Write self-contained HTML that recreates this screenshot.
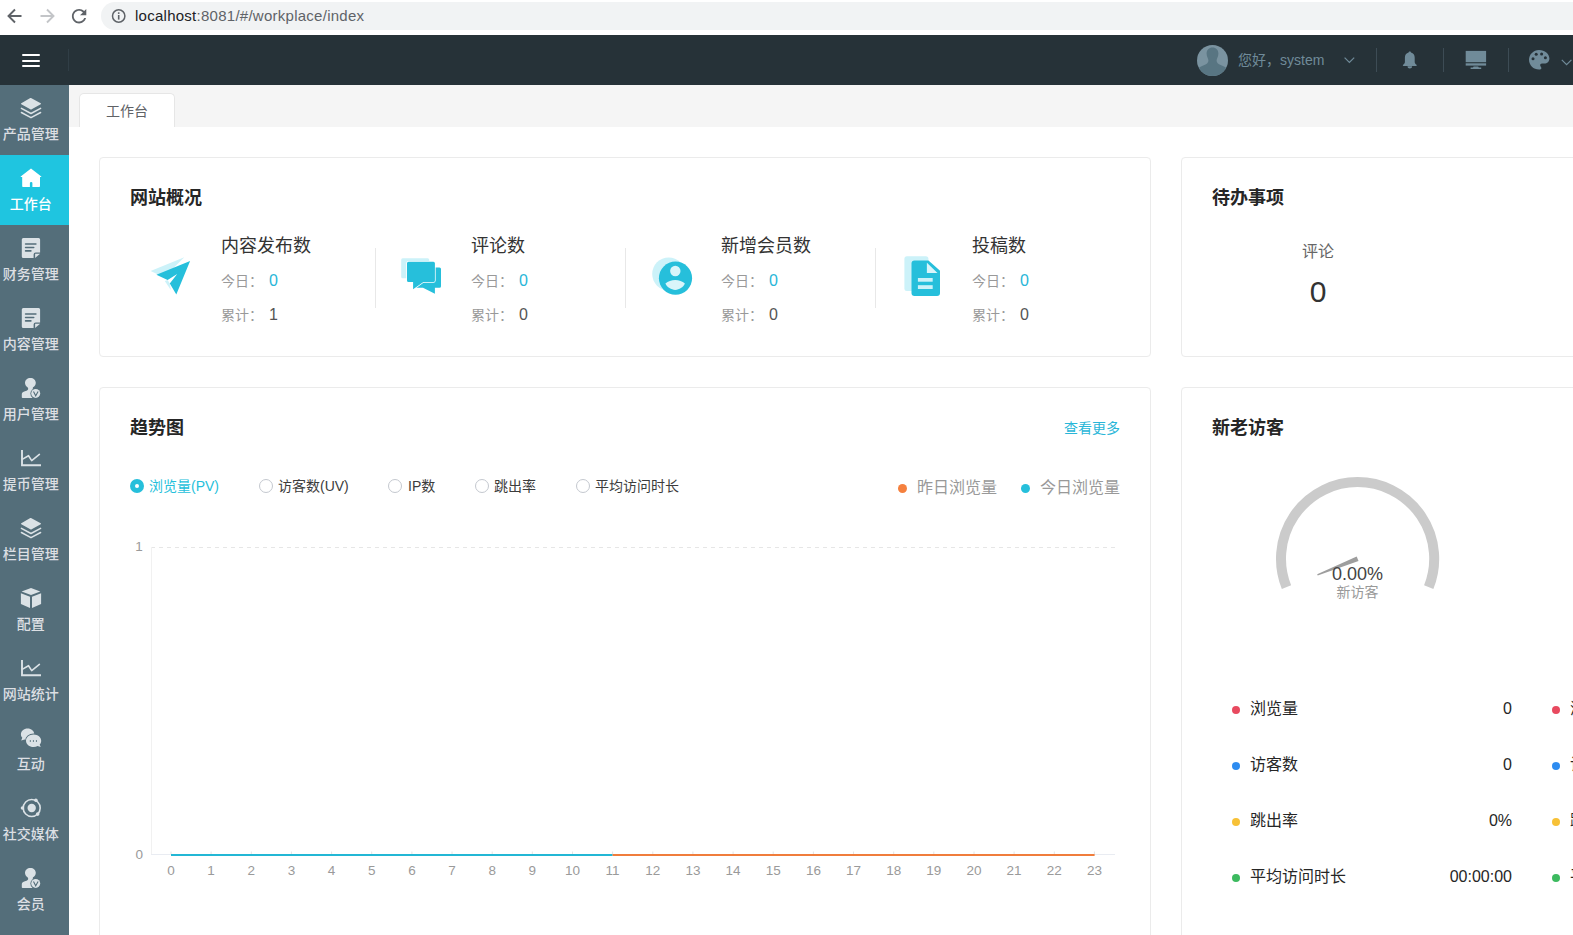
<!DOCTYPE html>
<html lang="zh-CN">
<head>
<meta charset="utf-8">
<title>工作台</title>
<style>
*{box-sizing:border-box;margin:0;padding:0}
html,body{width:1573px;height:935px;overflow:hidden;background:#fff}
body{position:relative;font-family:"Liberation Sans","Noto Sans CJK SC",sans-serif;color:#303133;font-size:14px}
.abs{position:absolute}
.t{position:absolute;white-space:nowrap;line-height:1}
/* browser chrome */
#chrome{left:0;top:0;width:1573px;height:35px;background:#fff}
#url{left:101px;top:2px;width:1600px;height:28px;border-radius:14px;background:#f1f3f4}
/* header */
#hdr{left:0;top:35px;width:1573px;height:50px;background:#263238}
/* sidebar */
#side{left:0;top:85px;width:69px;height:850px;background:#546e7a}
.mi{position:absolute;left:0;width:69px;height:70px;color:#dcdfe3}
.mi.on{background:#1fc5e0;color:#fff}
.mi .lb{font-weight:500;position:absolute;left:-24px;width:109.600px;text-align:center;top:41px;font-size:14px;line-height:16px;white-space:nowrap;letter-spacing:0}
.mi svg{position:absolute;left:19px;top:11px;width:24px;height:24px}
/* tabs */
#tabs{left:69px;top:85px;width:1504px;height:42px;background:#f5f5f5}
#tab{left:79px;top:93px;width:96px;height:34px;background:#fff;border:1px solid #e6e6e6;border-bottom:none;border-radius:5px 5px 0 0}
/* cards */
.card{position:absolute;background:#fff;border:1px solid #ebebeb;border-radius:4px}
.h{font-weight:bold;font-size:18px;color:#262626}
.g{color:#999;font-size:14px}
.c{color:#29b6d8}
.sep{position:absolute;width:1px;background:#e8e8e8}
</style>
</head>
<body>
<!-- browser chrome -->
<div class="abs" id="chrome"></div>
<div class="abs" id="url"></div>
<svg class="abs" style="left:0;top:0" width="135" height="35" viewBox="0 0 135 35">
  <g fill="none" stroke="#5f6368" stroke-width="1.9" stroke-linecap="butt" stroke-linejoin="miter">
    <path d="M21.5 16H9.5M15 9.5L8.5 16L15 22.500"/>
  </g>
  <path transform="translate(68.300 5.400) scale(0.900)" fill="#5f6368" d="M17.650 6.350C16.200 4.900 14.210 4 12 4c-4.420 0-7.990 3.580-7.990 8s3.570 8 7.990 8c3.730 0 6.840-2.550 7.730-6h-2.080c-.82 2.330-3.040 4-5.650 4-3.310 0-6-2.690-6-6s2.690-6 6-6c1.660 0 3.140.69 4.220 1.780L13 11h7V4l-2.350 2.350z"/>
  <g fill="none" stroke="#c3c5c8" stroke-width="1.9">
    <path d="M40.500 16H52.500M47 9.500L53.500 16L47 22.500"/>
  </g>
  <circle cx="118.700" cy="16" r="6.200" fill="none" stroke="#5f6368" stroke-width="1.500"/>
  <rect x="117.900" y="15" width="1.600" height="4.600" fill="#5f6368"/>
  <rect x="117.900" y="12.300" width="1.600" height="1.600" fill="#5f6368"/>
</svg>
<div class="t" style="left:135px;top:7px;font-size:15px;letter-spacing:0.260px;color:#202124;line-height:17px">localhost<span style="color:#5f6368">:8081/#/workplace/index</span></div>

<!-- header -->
<div class="abs" id="hdr"></div>
<div class="abs" style="left:22px;top:54px;width:18px;height:2px;background:#fff;border-radius:1px"></div>
<div class="abs" style="left:22px;top:59.500px;width:18px;height:2.200px;background:#fff;border-radius:1px"></div>
<div class="abs" style="left:22px;top:65px;width:18px;height:2px;background:#fff;border-radius:1px"></div>
<div class="abs" style="left:68px;top:49px;width:1px;height:22px;background:#303e46"></div>


<!-- header right -->
<svg class="abs" style="left:1190px;top:35px" width="383" height="50" viewBox="1190 35 383 50">
  <defs><clipPath id="av"><circle cx="1212.500" cy="60.500" r="15.500"/></clipPath></defs>
  <circle cx="1212.500" cy="60.500" r="15.500" fill="#7a93a0"/>
  <g clip-path="url(#av)" fill="#587582">
    <path d="M1212.500 47.500C1216 47.500 1218.400 50 1218.400 53.500C1218.400 55 1218 56.500 1217.400 57.800C1217 58.800 1216.600 59.600 1216.600 60.600C1216.600 62.200 1217.400 63.300 1219 64.200L1224 66.600C1226 67.600 1227 68.800 1227.500 70.500V78H1197.500V70.500C1198 68.800 1199 67.600 1201 66.600L1206 64.200C1207.600 63.300 1208.400 62.200 1208.400 60.600C1208.400 59.600 1208 58.800 1207.600 57.800C1207 56.500 1206.600 55 1206.600 53.500C1206.600 50 1209 47.500 1212.500 47.500Z"/>
  </g>
  <path d="M1344.600 57.600L1349.400 62.400L1354.200 57.600" fill="none" stroke="#708b99" stroke-width="1.200"/>
  <rect x="1376" y="48" width="1" height="24" fill="#3d4c55"/>
  <rect x="1443" y="48" width="1" height="24" fill="#3d4c55"/>
  <rect x="1508" y="48" width="1" height="24" fill="#3d4c55"/>
  <!-- bell -->
  <path d="M1409.800 51.400C1410.600 51.400 1411 51.900 1411 52.600C1413.400 53.200 1414.700 55.200 1414.700 57.600V62C1414.700 63.200 1415.400 64 1416.500 64.800C1416.900 65.100 1416.800 65.900 1416.200 65.900H1403.400C1402.800 65.900 1402.700 65.100 1403.100 64.800C1404.200 64 1404.900 63.200 1404.900 62V57.600C1404.900 55.200 1406.200 53.200 1408.600 52.600C1408.600 51.900 1409 51.400 1409.800 51.400Z" fill="#708b99"/>
  <path d="M1407.500 66.300H1412.100C1412.100 67.700 1411.100 68.500 1409.800 68.500C1408.500 68.500 1407.500 67.700 1407.500 66.300Z" fill="#708b99"/>
  <!-- monitor -->
  <rect x="1465.700" y="50.900" width="20.400" height="11.300" fill="#708b99"/>
  <rect x="1465.700" y="63.300" width="20.400" height="2.300" fill="#708b99"/>
  <path d="M1473.600 66.400H1478.200L1478.800 67.400H1481.200V68.900H1470.600V67.400H1473Z" fill="#708b99"/>
  <!-- palette -->
  <path d="M1539 49.900C1544.800 49.900 1549.400 53.800 1549.400 58.600C1549.400 61.600 1547.200 63.600 1544.400 63.600H1542C1540.800 63.600 1540.200 64.400 1540.200 65.200C1540.200 65.800 1540.500 66.200 1540.800 66.700C1541.200 67.200 1541.400 67.600 1541.400 68.200C1541.400 69.100 1540.500 69.600 1539 69.600C1533.500 69.600 1529 65.300 1529 59.800C1529 54.300 1533.500 49.900 1539 49.900Z" fill="#708b99"/>
  <g fill="#263238"><circle cx="1533" cy="58.700" r="1.500"/><circle cx="1536.200" cy="54.300" r="1.500"/><circle cx="1541.600" cy="54" r="1.500"/><circle cx="1545.400" cy="57.800" r="1.500"/></g>
  <path d="M1561.800 59.800L1566.600 64.600L1571.400 59.800" fill="none" stroke="#708b99" stroke-width="1.200"/>
</svg>
<div class="t" style="left:1238px;top:53px;font-size:14px;line-height:14px;color:#708b99">您好，system</div>

<!-- sidebar -->
<div class="abs" id="side"></div>
<div class="mi" style="top:85px"><svg viewBox="0 0 24 24"><path d="M12 1.900L21.700 7.200Q22.500 7.700 21.700 8.200L12.700 13.300Q12 13.700 11.300 13.300L2.300 8.200Q1.500 7.700 2.300 7.200L11.300 2.100Q12 1.700 12.700 2.100Z" fill="#dbe2e6"/><path d="M2.400 12.300L12 17.500L21.600 12.300M2.400 16.500L12 21.700L21.600 16.500" fill="none" stroke="#dbe2e6" stroke-width="1.500" stroke-linecap="round" stroke-linejoin="round"/></svg><div class="lb">产品管理</div></div>
<div class="mi on" style="top:155px"><svg viewBox="0 0 24 24"><path d="M12 2.600L22.300 10.600Q22.500 11.100 21.900 11.100H21V20.200Q21 21 20.200 21H13.400V17Q13.400 16 12.200 16Q10.900 16 10.900 17V21H4Q3.200 21 3.200 20.200V11.100H2.100Q1.500 11.100 1.700 10.600Z" fill="#fff"/></svg><div class="lb">工作台</div></div>
<div class="mi" style="top:225px"><svg viewBox="0 0 24 24"><path d="M4.300 1.900H19.600Q21.100 1.900 21.100 3.400V16.400H16.600Q14.600 16.400 14.600 18.400V22.100H4.300Q2.800 22.100 2.800 20.600V3.400Q2.800 1.900 4.300 1.900Z" fill="#dbe2e6"/><path d="M16.100 17.700H21.100L16.100 22.100Z" fill="#dbe2e6"/><path d="M6.600 8H16.900M6.600 11.500H14.700M6.600 14.900H11.900" stroke="#546e7a" stroke-width="1.600" stroke-linecap="round" fill="none"/></svg><div class="lb">财务管理</div></div>
<div class="mi" style="top:295px"><svg viewBox="0 0 24 24"><path d="M4.300 1.900H19.600Q21.100 1.900 21.100 3.400V16.400H16.600Q14.600 16.400 14.600 18.400V22.100H4.300Q2.800 22.100 2.800 20.600V3.400Q2.800 1.900 4.300 1.900Z" fill="#dbe2e6"/><path d="M16.100 17.700H21.100L16.100 22.100Z" fill="#dbe2e6"/><path d="M6.600 8H16.900M6.600 11.500H14.700M6.600 14.900H11.900" stroke="#546e7a" stroke-width="1.600" stroke-linecap="round" fill="none"/></svg><div class="lb">内容管理</div></div>
<div class="mi" style="top:365px"><svg viewBox="0 0 24 24"><path d="M11.400 1.900C14.500 1.900 16.800 4 16.800 6.800C16.800 8.800 15.600 10.400 14.100 11.200C13.600 11.600 13.600 12.700 14.200 13L15 13.500L14 22H3.600Q2.800 22 2.800 21.200V18.200C2.800 16.800 3.800 16 5.200 15.600L7.600 14.800C8.800 14.300 9.200 13.600 9.200 12.800C9.200 12 8.800 11.600 8.200 11C6.900 10 6 8.600 6 6.800C6 4 8.300 1.900 11.400 1.900Z" fill="#dbe2e6"/><circle cx="16.700" cy="17.400" r="5.300" fill="#546e7a"/><circle cx="16.700" cy="17.400" r="4.500" fill="#dbe2e6"/><path d="M14.500 15.500L16.700 19.800L19.100 15.500" fill="none" stroke="#546e7a" stroke-width="1.100"/></svg><div class="lb">用户管理</div></div>
<div class="mi" style="top:435px"><svg viewBox="0 0 24 24"><path d="M3 3.900V19.200H22" fill="none" stroke="#dbe2e6" stroke-width="1.900" stroke-linecap="butt" stroke-linejoin="miter"/><path d="M3.600 13.100L9.500 9.700L12.700 14.600L20.400 8.400" fill="none" stroke="#dbe2e6" stroke-width="1.600" stroke-linecap="round" stroke-linejoin="round"/></svg><div class="lb">提币管理</div></div>
<div class="mi" style="top:505px"><svg viewBox="0 0 24 24"><path d="M12 1.900L21.700 7.200Q22.500 7.700 21.700 8.200L12.700 13.300Q12 13.700 11.300 13.300L2.300 8.200Q1.500 7.700 2.300 7.200L11.300 2.100Q12 1.700 12.700 2.100Z" fill="#dbe2e6"/><path d="M2.400 12.300L12 17.500L21.600 12.300M2.400 16.500L12 21.700L21.600 16.500" fill="none" stroke="#dbe2e6" stroke-width="1.500" stroke-linecap="round" stroke-linejoin="round"/></svg><div class="lb">栏目管理</div></div>
<div class="mi" style="top:575px"><svg viewBox="0 0 24 24"><path d="M12 1.900L21.300 5.600L12 9L2.600 5.600Z" fill="#dbe2e6"/><path d="M1.900 7.300L11 10.700V21.900L1.900 18Z" fill="#dbe2e6"/><path d="M13 10.700L22.100 7.300V18L13 21.900Z" fill="#dbe2e6"/></svg><div class="lb">配置</div></div>
<div class="mi" style="top:645px"><svg viewBox="0 0 24 24"><path d="M3 3.900V19.200H22" fill="none" stroke="#dbe2e6" stroke-width="1.900" stroke-linecap="butt" stroke-linejoin="miter"/><path d="M3.600 13.100L9.500 9.700L12.700 14.600L20.400 8.400" fill="none" stroke="#dbe2e6" stroke-width="1.600" stroke-linecap="round" stroke-linejoin="round"/></svg><div class="lb">网站统计</div></div>
<div class="mi" style="top:715px"><svg viewBox="0 0 24 24"><path d="M8.600 2.400C12.300 2.400 15.300 5 15.300 8.200C15.300 11.400 12.300 14 8.600 14C7.500 14 6.500 13.800 5.600 13.400L2.200 14.400L3.300 11.800C2.400 10.800 1.900 9.600 1.900 8.200C1.900 5 4.900 2.400 8.600 2.400Z" fill="#dbe2e6"/><ellipse cx="14.600" cy="14.700" rx="8.400" ry="7.200" fill="#546e7a"/><path d="M14.600 8.400C18.800 8.400 22.200 11.200 22.200 14.700C22.200 16.100 21.700 17.400 20.700 18.400L21.700 21L18.600 20.100C17.400 20.700 16.100 21 14.600 21C10.400 21 7 18.200 7 14.700C7 11.200 10.400 8.400 14.600 8.400Z" fill="#dbe2e6"/><path d="M10.800 15H11.900M13.900 15H15M16.900 15H18" stroke="#546e7a" stroke-width="1.300" fill="none"/></svg><div class="lb">互动</div></div>
<div class="mi" style="top:785px"><svg viewBox="0 0 24 24"><circle cx="12.700" cy="12" r="8.500" fill="none" stroke="#dbe2e6" stroke-width="1.600"/><circle cx="12.700" cy="12" r="4.200" fill="#dbe2e6"/><circle cx="3.500" cy="12" r="1.800" fill="#dbe2e6"/><circle cx="16.900" cy="4.300" r="1.800" fill="#dbe2e6"/><circle cx="18.700" cy="18.100" r="1.800" fill="#dbe2e6"/></svg><div class="lb">社交媒体</div></div>
<div class="mi" style="top:855px"><svg viewBox="0 0 24 24"><path d="M11.400 1.900C14.500 1.900 16.800 4 16.800 6.800C16.800 8.800 15.600 10.400 14.100 11.200C13.600 11.600 13.600 12.700 14.200 13L15 13.500L14 22H3.600Q2.800 22 2.800 21.200V18.200C2.800 16.800 3.800 16 5.200 15.600L7.600 14.800C8.800 14.300 9.200 13.600 9.200 12.800C9.200 12 8.800 11.600 8.200 11C6.900 10 6 8.600 6 6.800C6 4 8.300 1.900 11.400 1.900Z" fill="#dbe2e6"/><circle cx="16.700" cy="17.400" r="5.300" fill="#546e7a"/><circle cx="16.700" cy="17.400" r="4.500" fill="#dbe2e6"/><path d="M14.500 15.500L16.700 19.800L19.100 15.500" fill="none" stroke="#546e7a" stroke-width="1.100"/></svg><div class="lb">会员</div></div>

<!-- tabs -->
<div class="abs" id="tabs"></div>
<div class="abs" id="tab"></div>
<div class="t" style="left:106px;top:104px;font-size:14px;color:#606266;line-height:14px">工作台</div>

<!-- CARDS -->
<div class="card" style="left:99px;top:157px;width:1052px;height:200px"></div>
<div class="card" style="left:1181px;top:157px;width:500px;height:200px"></div>
<div class="card" style="left:99px;top:387px;width:1052px;height:700px"></div>
<div class="card" style="left:1181px;top:387px;width:500px;height:700px"></div>

<!-- overview -->
<div class="t h" style="left:130px;top:189px;line-height:18px">网站概况</div>
<div class="t" style="left:221px;top:236px;font-size:18px;line-height:20px;color:#333">内容发布数</div>
<div class="t g" style="left:221px;top:274px;line-height:14px">今日：</div><div class="t c" style="left:269px;top:273px;font-size:16px;line-height:16px">0</div>
<div class="t g" style="left:221px;top:308px;line-height:14px">累计：</div><div class="t" style="left:269px;top:307px;font-size:16px;line-height:16px;color:#555">1</div>
<div class="t" style="left:471px;top:236px;font-size:18px;line-height:20px;color:#333">评论数</div>
<div class="t g" style="left:471px;top:274px;line-height:14px">今日：</div><div class="t c" style="left:519px;top:273px;font-size:16px;line-height:16px">0</div>
<div class="t g" style="left:471px;top:308px;line-height:14px">累计：</div><div class="t" style="left:519px;top:307px;font-size:16px;line-height:16px;color:#555">0</div>
<div class="t" style="left:721px;top:236px;font-size:18px;line-height:20px;color:#333">新增会员数</div>
<div class="t g" style="left:721px;top:274px;line-height:14px">今日：</div><div class="t c" style="left:769px;top:273px;font-size:16px;line-height:16px">0</div>
<div class="t g" style="left:721px;top:308px;line-height:14px">累计：</div><div class="t" style="left:769px;top:307px;font-size:16px;line-height:16px;color:#555">0</div>
<div class="t" style="left:972px;top:236px;font-size:18px;line-height:20px;color:#333">投稿数</div>
<div class="t g" style="left:972px;top:274px;line-height:14px">今日：</div><div class="t c" style="left:1020px;top:273px;font-size:16px;line-height:16px">0</div>
<div class="t g" style="left:972px;top:308px;line-height:14px">累计：</div><div class="t" style="left:1020px;top:307px;font-size:16px;line-height:16px;color:#555">0</div>
<div class="sep" style="left:375px;top:248px;height:60px"></div>
<div class="sep" style="left:625px;top:248px;height:60px"></div>
<div class="sep" style="left:875px;top:248px;height:60px"></div>
<svg class="abs" style="left:145px;top:250px" width="50" height="50" viewBox="145 250 50 50">
  <path d="M184.300 257.200L150.600 271L161.800 276.200L171.400 270.100Z" fill="#ccf2f9"/>
  <path d="M167.600 280L169.800 283.500L170.800 290L164.800 281Z" fill="#ccf2f9"/>
  <path d="M190.100 261L156.400 274.800L167.600 280L177.200 273.900L169.800 283.500L176.300 294.400Z" fill="#26bfdb"/>
</svg>
<svg class="abs" style="left:395px;top:250px" width="50" height="50" viewBox="395 250 50 50">
  <rect x="401.200" y="258.200" width="28" height="20" rx="1.500" fill="#ccf2f9"/>
  <path d="M416 267.500H439.500Q441 267.500 441 269V286.200Q441 287.700 439.500 287.700H434.900V293.800L423 287.700H416Z" fill="#26bfdb"/>
  <path d="M408.500 261.700H433.400Q434.900 261.700 434.900 263.200V280.400Q434.900 281.900 433.400 281.900H423.400L413.100 289.300V281.900H408.500Q407 281.900 407 280.400V263.200Q407 261.700 408.500 261.700Z" fill="#26bfdb" stroke="#fff" stroke-width="1.500" stroke-linejoin="round"/>
  <path d="M408.500 261.700H433.400Q434.900 261.700 434.900 263.200V280.400Q434.900 281.900 433.400 281.900H423.400L413.100 289.300V281.900H408.500Q407 281.900 407 280.400V263.200Q407 261.700 408.500 261.700Z" fill="#26bfdb"/>
</svg>
<svg class="abs" style="left:645px;top:250px" width="50" height="50" viewBox="645 250 50 50">
  <circle cx="668.700" cy="274" r="16.500" fill="#ccf2f9"/>
  <circle cx="675.500" cy="278.200" r="16.600" fill="#26bfdb"/>
  <circle cx="675.300" cy="271" r="5.200" fill="#d9f5fa"/>
  <path d="M665.400 283.600C668 281.200 671.500 280 675.200 280C678.900 280 682.400 281.200 684.900 283.600C683 287.500 679.400 289.900 675.200 289.900C671 289.900 667.300 287.500 665.400 283.600Z" fill="#d9f5fa"/>
</svg>
<svg class="abs" style="left:895px;top:250px" width="50" height="50" viewBox="895 250 50 50">
  <rect x="904.400" y="256.200" width="24" height="34.700" rx="2.500" fill="#ccf2f9"/>
  <path d="M914.500 260.400H928.500L940 270.700V293Q940 296 937 296H914.500Q911.500 296 911.500 293V263.400Q911.500 260.400 914.500 260.400Z" fill="#26bfdb"/>
  <path d="M926.900 262.700L937.500 272.900H926.900Z" fill="#d9f5fa"/>
  <rect x="917.900" y="278" width="14.800" height="3.700" fill="#ccf2f9"/>
  <rect x="917.900" y="285.200" width="14.800" height="3.800" fill="#ccf2f9"/>
</svg>
<!-- todo -->
<div class="t h" style="left:1212px;top:189px;line-height:18px">待办事项</div>
<div class="t" style="left:1302px;top:243px;font-size:16px;line-height:18px;color:#666">评论</div>
<div class="t" style="left:1268px;top:276px;width:100px;text-align:center;font-size:30px;line-height:32px;color:#333">0</div>
<!-- trend -->
<div class="t h" style="left:130px;top:419px;line-height:18px">趋势图</div>
<div class="t c" style="left:1064px;top:420px;font-size:14px;line-height:16px">查看更多</div>
<div class="abs" style="left:130.200px;top:479px;width:14px;height:14px;border-radius:50%;background:#26bfdb"></div><div class="abs" style="left:134.900px;top:483.700px;width:4.600px;height:4.600px;border-radius:50%;background:#fff"></div>
<div class="t" style="left:149px;top:478px;font-size:14px;line-height:16px;color:#26bfdb">浏览量(PV)</div>
<div class="abs" style="left:258.7px;top:479px;width:14px;height:14px;border-radius:50%;border:1px solid #c4c8cf;background:#fff"></div>
<div class="t" style="left:278px;top:478px;font-size:14px;line-height:16px;color:#3c3c3c">访客数(UV)</div>
<div class="abs" style="left:388.4px;top:479px;width:14px;height:14px;border-radius:50%;border:1px solid #c4c8cf;background:#fff"></div>
<div class="t" style="left:408px;top:478px;font-size:14px;line-height:16px;color:#3c3c3c">IP数</div>
<div class="abs" style="left:474.8px;top:479px;width:14px;height:14px;border-radius:50%;border:1px solid #c4c8cf;background:#fff"></div>
<div class="t" style="left:494px;top:478px;font-size:14px;line-height:16px;color:#3c3c3c">跳出率</div>
<div class="abs" style="left:575.6px;top:479px;width:14px;height:14px;border-radius:50%;border:1px solid #c4c8cf;background:#fff"></div>
<div class="t" style="left:595px;top:478px;font-size:14px;line-height:16px;color:#3c3c3c">平均访问时长</div>
<div class="abs" style="left:898px;top:484px;width:9px;height:9px;border-radius:50%;background:#f5803e"></div>
<div class="t" style="left:917px;top:478.500px;font-size:16px;line-height:18px;color:#999">昨日浏览量</div>
<div class="abs" style="left:1021px;top:484px;width:9px;height:9px;border-radius:50%;background:#26bfdb"></div>
<div class="t" style="left:1040px;top:478.500px;font-size:16px;line-height:18px;color:#999">今日浏览量</div>
<svg class="abs" style="left:100px;top:520px" width="1050" height="380" viewBox="100 520 1050 380" font-family="'Liberation Sans',sans-serif" font-size="13.500" fill="#9a9a9a">
<path d="M151 547.500H1115" stroke="#e6e6e6" stroke-width="1" stroke-dasharray="4 4" fill="none"/>
<path d="M151.500 547V855" stroke="#f1f1f1" stroke-width="1" fill="none"/>
<path d="M151 854.500H1115" stroke="#e9ecf2" stroke-width="1" fill="none"/>
<path d="M171.0 851.500V854M211.1 851.500V854M251.3 851.500V854M291.4 851.500V854M331.6 851.500V854M371.7 851.500V854M411.9 851.500V854M452.0 851.500V854M492.2 851.500V854M532.3 851.500V854M572.5 851.500V854M612.6 851.500V854M652.8 851.500V854M692.9 851.500V854M733.1 851.500V854M773.2 851.500V854M813.4 851.500V854M853.5 851.500V854M893.7 851.500V854M933.8 851.500V854M974.0 851.500V854M1014.1 851.500V854M1054.3 851.500V854M1094.4 851.500V854" stroke="#e4e4e4" stroke-width="1" fill="none"/>
<path d="M171 855H612.6" stroke="#23b7d5" stroke-width="2" fill="none"/>
<path d="M612.6 855H1094.600" stroke="#f07d3c" stroke-width="2" fill="none"/>
<text x="139" y="551.300" text-anchor="middle">1</text>
<text x="139.200" y="858.800" text-anchor="middle">0</text>
<text x="171.0" y="875" text-anchor="middle">0</text>
<text x="211.1" y="875" text-anchor="middle">1</text>
<text x="251.3" y="875" text-anchor="middle">2</text>
<text x="291.4" y="875" text-anchor="middle">3</text>
<text x="331.6" y="875" text-anchor="middle">4</text>
<text x="371.7" y="875" text-anchor="middle">5</text>
<text x="411.9" y="875" text-anchor="middle">6</text>
<text x="452.0" y="875" text-anchor="middle">7</text>
<text x="492.2" y="875" text-anchor="middle">8</text>
<text x="532.3" y="875" text-anchor="middle">9</text>
<text x="572.5" y="875" text-anchor="middle">10</text>
<text x="612.6" y="875" text-anchor="middle">11</text>
<text x="652.8" y="875" text-anchor="middle">12</text>
<text x="692.9" y="875" text-anchor="middle">13</text>
<text x="733.1" y="875" text-anchor="middle">14</text>
<text x="773.2" y="875" text-anchor="middle">15</text>
<text x="813.4" y="875" text-anchor="middle">16</text>
<text x="853.5" y="875" text-anchor="middle">17</text>
<text x="893.7" y="875" text-anchor="middle">18</text>
<text x="933.8" y="875" text-anchor="middle">19</text>
<text x="974.0" y="875" text-anchor="middle">20</text>
<text x="1014.1" y="875" text-anchor="middle">21</text>
<text x="1054.3" y="875" text-anchor="middle">22</text>
<text x="1094.4" y="875" text-anchor="middle">23</text>
</svg>
<!-- visitors -->
<div class="t h" style="left:1212px;top:419px;line-height:18px">新老访客</div>
<svg class="abs" style="left:1260px;top:460px" width="200" height="150" viewBox="1260 460 200 150">
<path d="M1286.48 587.15A76.6 76.6 0 1 1 1428.72 587.15" fill="none" stroke="#cbcbcb" stroke-width="10"/>
<path d="M1317.19 574.27L1356.68 556.43L1358.52 560.97L1317.72 575.57Z" fill="#9e9e9e"/>
</svg>
<div class="t" style="left:1307.500px;top:564px;width:100px;text-align:center;font-size:18px;line-height:20px;color:#444">0.00%</div>
<div class="t" style="left:1307.500px;top:584px;width:100px;text-align:center;font-size:14px;line-height:16px;color:#999">新访客</div>
<div class="abs" style="left:1232px;top:706px;width:8px;height:8px;border-radius:50%;background:#e84a5f"></div>
<div class="t" style="left:1250px;top:699.5px;font-size:16px;line-height:18px;color:#262626">浏览量</div>
<div class="t" style="left:1312px;top:699.5px;width:200px;text-align:right;font-size:16px;line-height:18px;color:#262626">0</div>
<div class="abs" style="left:1552px;top:706px;width:8px;height:8px;border-radius:50%;background:#e84a5f"></div>
<div class="t" style="left:1570px;top:699.5px;font-size:16px;line-height:18px;color:#262626">浏览量</div>
<div class="abs" style="left:1232px;top:762px;width:8px;height:8px;border-radius:50%;background:#2d8cf0"></div>
<div class="t" style="left:1250px;top:755.5px;font-size:16px;line-height:18px;color:#262626">访客数</div>
<div class="t" style="left:1312px;top:755.5px;width:200px;text-align:right;font-size:16px;line-height:18px;color:#262626">0</div>
<div class="abs" style="left:1552px;top:762px;width:8px;height:8px;border-radius:50%;background:#2d8cf0"></div>
<div class="t" style="left:1570px;top:755.5px;font-size:16px;line-height:18px;color:#262626">访客数</div>
<div class="abs" style="left:1232px;top:818px;width:8px;height:8px;border-radius:50%;background:#f7c137"></div>
<div class="t" style="left:1250px;top:811.5px;font-size:16px;line-height:18px;color:#262626">跳出率</div>
<div class="t" style="left:1312px;top:811.5px;width:200px;text-align:right;font-size:16px;line-height:18px;color:#262626">0%</div>
<div class="abs" style="left:1552px;top:818px;width:8px;height:8px;border-radius:50%;background:#f7c137"></div>
<div class="t" style="left:1570px;top:811.5px;font-size:16px;line-height:18px;color:#262626">跳出率</div>
<div class="abs" style="left:1232px;top:873.6px;width:8px;height:8px;border-radius:50%;background:#3cba5f"></div>
<div class="t" style="left:1250px;top:868px;font-size:16px;line-height:18px;color:#262626">平均访问时长</div>
<div class="t" style="left:1312px;top:868px;width:200px;text-align:right;font-size:16px;line-height:18px;color:#262626">00:00:00</div>
<div class="abs" style="left:1552px;top:873.6px;width:8px;height:8px;border-radius:50%;background:#3cba5f"></div>
<div class="t" style="left:1570px;top:868px;font-size:16px;line-height:18px;color:#262626">平均访问时长</div>
</body>
</html>
